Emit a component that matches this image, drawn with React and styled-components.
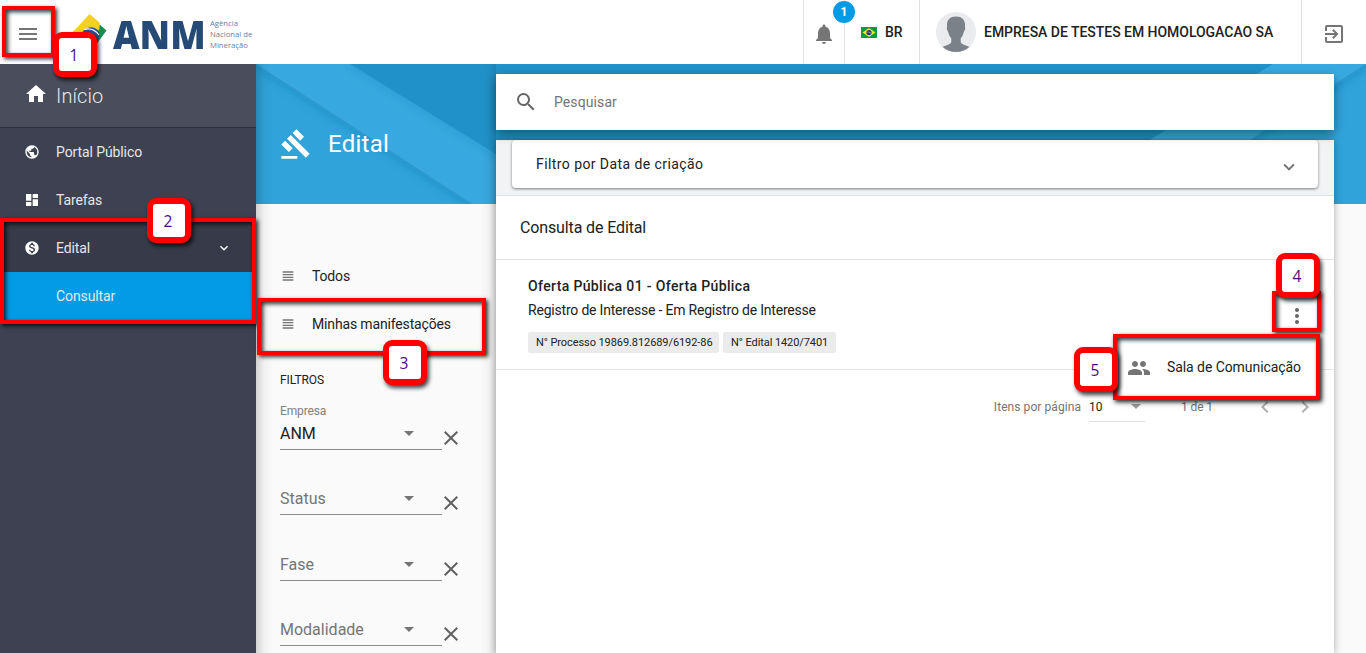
import React from "react";
import styled, { createGlobalStyle } from "styled-components";
import {
  MdMenu, MdHome, MdPublic, MdDashboard, MdMonetizationOn, MdKeyboardArrowDown,
  MdNotifications, MdExitToApp, MdGavel, MdSearch, MdViewHeadline, MdClose,
  MdPeople, MdMoreVert, MdChevronLeft, MdChevronRight,
} from "react-icons/md";

const GlobalStyle = createGlobalStyle`
  * { box-sizing: border-box; }
  body { margin: 0; overflow: hidden; background: #fafafa; }
  svg { display: block; flex: none; }
`;

const Page = styled.div`
  position: relative;
  display: flex;
  flex-direction: column;
  width: 1366px;
  height: 653px;
  overflow: hidden;
  font-family: Roboto, "Liberation Sans", sans-serif;
  font-size: 14px;
  color: #212121;
`;

/* Top bar */
const TopBar = styled.header`
  display: flex;
  height: 64px;
  flex: none;
  background: #fff;
`;
const MenuButton = styled.div`
  display: flex;
  padding: 22px 0 0 16px;
  width: 73px;
  color: #757575;
`;
const Brand = styled.div`
  display: flex;
  flex: 1;
  padding-top: 14px;
`;
const BrandName = styled.div`
  width: 97px;
  margin-left: 6px;
  font: 800 39px/39px "Open Sans", sans-serif;
  color: #254a75;
  transform: scaleX(0.94);
  transform-origin: left;
  white-space: nowrap;
`;
const BrandCaption = styled.div`
  padding-top: 4px;
  font: 400 7.7px/11px "Open Sans", sans-serif;
  color: #6483a6;
  white-space: nowrap;
`;
const TopCell = styled.div`
  position: relative;
  display: flex;
  gap: 8px;
  width: ${(p) => p.$width}px;
  padding: ${(p) => p.$pad};
  border-left: 1px solid #e0e0e0;
  color: #757575;
`;
const TopLabel = styled.span`
  margin-top: ${(p) => p.$top || 0}px;
  font-weight: 500;
  line-height: 16px;
  letter-spacing: ${(p) => p.$spacing || 0}px;
  color: #212121;
  white-space: nowrap;
`;
const FlagSlot = styled.span`
  padding-top: 3px;
`;
const Counter = styled.span`
  position: absolute;
  top: 1px;
  right: -11px;
  z-index: 1;
  width: 22px;
  height: 22px;
  border-radius: 50%;
  background: #039be5;
  color: #fff;
  font-size: 12px;
  font-weight: 700;
  line-height: 22px;
  text-align: center;
`;

/* Sidebar */
const Body = styled.div`
  display: flex;
  flex: 1;
  min-height: 0;
`;
const Sidebar = styled.nav`
  width: 256px;
  flex: none;
  background: #3d4151;
  color: #e6e7ea;
`;
const SideHome = styled.div`
  display: flex;
  height: 64px;
  padding: 18px 0 0 24px;
  gap: 8px;
  background: #494d5c;
  border-bottom: 1px solid #2e313d;
  font-size: 20px;
  font-weight: 300;
  line-height: 28px;
  letter-spacing: 0.1px;
  svg { color: #fff; }
`;
const SideItem = styled.div`
  display: flex;
  align-items: center;
  height: 48px;
  padding: 0 24px;
  background: ${(p) => p.$bg || "transparent"};
  letter-spacing: -0.1px;
  svg { color: #fff; }
`;
const SideLabel = styled.span`
  flex: 1;
  margin-left: ${(p) => (p.$nested ? 32 : 16)}px;
`;

/* Content */
const Content = styled.div`
  position: relative;
  display: flex;
  flex: 1;
  background: #fafafa;
`;
const Backdrop = styled.svg`
  position: absolute;
  top: 0;
  left: 0;
`;
const FilterColumn = styled.aside`
  position: relative;
  width: 240px;
  background: linear-gradient(90deg, rgba(0,0,0,.16), rgba(0,0,0,.04) 8px, transparent 17px,
    transparent 224px, rgba(0,0,0,.03) 233px, rgba(0,0,0,.1));
  padding: 0 24px;
`;
const Heading = styled.div`
  display: flex;
  align-items: center;
  gap: 16px;
  height: 140px;
  padding-top: 20px;
  margin-bottom: 48px;
  color: #fff;
  font-size: 24px;
  letter-spacing: 0.25px;
`;
const ListLink = styled.div`
  display: flex;
  align-items: center;
  gap: 16px;
  height: 48px;
  letter-spacing: -0.15px;
  white-space: nowrap;
  svg { color: #757575; }
`;
const GroupTitle = styled.div`
  margin-top: 25px;
  height: 11.7px;
  font-size: 12px;
  line-height: 15px;
  letter-spacing: -0.1px;
`;
const Field = styled.div`
  display: flex;
  height: 65.35px;
  align-items: flex-end;
`;
const SelectBox = styled.div`
  width: 162px;
  padding-right: 28px;
  border-bottom: 1px solid #8c8c8c;
  height: ${(p) => (p.$caption ? 48 : 27)}px;
`;
const Caption = styled.div`
  height: 21px;
  font-size: 12px;
  line-height: 18px;
  letter-spacing: -0.15px;
  color: #808080;
`;
const SelectValue = styled.div`
  display: flex;
  align-items: center;
  justify-content: space-between;
  height: 21px;
  font-size: 16px;
  color: ${(p) => (p.$filled ? "#212121" : "#757575")};
`;
const Caret = styled.i`
  border: solid transparent;
  border-width: 5px 5px 0;
  border-top-color: #757575;
`;
const ClearButton = styled.div`
  margin: 0 0 0 -3px;
  width: 24px;
  color: #616161;
`;

/* Main panel */
const Main = styled.main`
  position: relative;
  display: flex;
  flex-direction: column;
  width: 838px;
`;
const SearchBar = styled.div`
  position: relative;
  z-index: 1;
  display: flex;
  align-items: center;
  gap: 16px;
  height: 56px;
  flex: none;
  margin: 10px 0;
  padding: 0 18px;
  background: #fff;
  box-shadow: 0 4px 10px rgba(0,0,0,.4);
  color: #757575;
  svg { color: #666; }
`;
const SearchHint = styled.span`
  letter-spacing: 0.1px;
`;
const Results = styled.section`
  flex: 1;
  background: #fff;
  box-shadow: 0 1px 8px rgba(0,0,0,.32);
`;
const FilterStrip = styled.div`
  height: 56px;
  padding: 0 16px;
  background: #f2f3f5;
  border-bottom: 1px solid #dedfe1;
`;
const Expander = styled.div`
  display: flex;
  justify-content: space-between;
  align-items: center;
  height: 48px;
  padding: 0 18px 0 24px;
  border-radius: 4px;
  background: #fff;
  box-shadow: 0 1px 3px rgba(0,0,0,.5);
  letter-spacing: 0.42px;
  svg { color: #757575; margin-top: 6px; }
`;
const ResultsTitle = styled.div`
  height: 64px;
  padding: 0 24px;
  border-bottom: 1px solid #e0e0e0;
  font-size: 16px;
  line-height: 63px;
  letter-spacing: -0.13px;
`;
const Notice = styled.article`
  display: flex;
  justify-content: space-between;
  height: 110px;
  padding: 17px 25px 0 32px;
  border-bottom: 1px solid #e6e6e6;
`;
const NoticeTitle = styled.div`
  font-weight: 500;
  line-height: 18px;
  letter-spacing: 0.36px;
`;
const NoticeText = styled.div`
  margin-top: 6px;
  line-height: 18px;
  letter-spacing: -0.2px;
`;
const Tags = styled.div`
  display: flex;
  gap: 4px;
  margin-top: 13px;
`;
const Tag = styled.span`
  height: 21px;
  width: ${(p) => p.$width}px;
  padding-left: 8px;
  border-radius: 2px;
  background: #ebebeb;
  font-size: 11px;
  line-height: 21px;
  letter-spacing: -0.08px;
  white-space: nowrap;
`;
const MoreButton = styled.div`
  margin-top: 27px;
  color: #666;
`;
const Pager = styled.div`
  display: flex;
  justify-content: flex-end;
  padding: 25px 17px 0 0;
  font-size: 12px;
  line-height: 24px;
  color: #757575;
`;
const PagerSize = styled.div`
  display: flex;
  align-items: center;
  justify-content: space-between;
  width: 56px;
  height: 27px;
  margin: 0 36px 0 8px;
  padding: 0 4px 3px 0;
  border-bottom: 1px solid #e0e0e0;
  color: #212121;
  i { opacity: .7; }
`;
const PagerArrows = styled.div`
  display: flex;
  gap: 16px;
  margin-left: 40px;
  color: #b0b0b0;
`;
const PagerText = styled.span`
  letter-spacing: ${(p) => p.$spacing || 0}px;
`;
const ContextMenu = styled.div`
  position: absolute;
  z-index: 2;
  left: 620px;
  top: 272px;
  display: flex;
  align-items: center;
  gap: 16px;
  width: 204px;
  height: 63px;
  padding-left: 11px;
  background: #fff;
  box-shadow: 0 2px 8px rgba(0,0,0,.3);
  white-space: nowrap;
  letter-spacing: -0.07px;
  svg { color: #757575; }
`;
const MenuLabel = styled.span`
  padding-bottom: 2px;
`;

/* Tutorial callouts drawn over the screen */
const Frame = styled.div`
  position: absolute;
  z-index: 5;
  left: ${(p) => p.$x}px;
  top: ${(p) => p.$y}px;
  width: ${(p) => p.$w}px;
  height: ${(p) => p.$h}px;
  border: 4px solid #f00;
  box-shadow: 2px 2px 4px rgba(0,0,0,.8), inset 2px 2px 4px rgba(0,0,0,.8);
`;
const Step = styled.div`
  position: absolute;
  z-index: 6;
  left: ${(p) => p.$x}px;
  top: ${(p) => p.$y}px;
  width: 44px;
  height: 45px;
  padding-right: 2px;
  border: 6px solid #f00;
  border-radius: 9px;
  background: #fff;
  box-shadow: 2px 3px 4px rgba(0,0,0,.75);
  font: 400 15.5px/35px "Open Sans", "Noto Sans", sans-serif;
  color: #4b0a82;
  text-align: center;
`;

const frames = [
  [2, 6, 53, 51], [0, 218, 256, 106], [257, 298, 229, 57], [1272, 291, 49, 41], [1113, 334, 207, 66],
];
const steps = [[53, 32], [147, 198], [383, 340], [1276, 253], [1074, 347]];

function BrandMark() {
  return (
    <svg width="34" height="36" viewBox="0 0 34 36">
      <path d="M0 17 L12 15 Q18 30 25 24 L25 9 L33.500 16.500 L20 35 Z" fill="#1c8a55" />
      <path d="M16.500 0 L27 9 L26 17 Q20 10 9 18 L0 18 Z" fill="#f3d021" />
      <path d="M10 17 Q18 10 25 16 Q28 20 25 26 Q18 31 10 17Z" fill="#21528c" />
      <path d="M11 15.500 Q20 13 26 21" fill="none" stroke="#fff" strokeWidth="1.100" />
    </svg>
  );
}

function Flag() {
  return (
    <svg width="16" height="11" viewBox="0 0 16 11">
      <rect width="16" height="11" fill="#0d9a3c" />
      <path d="M8 1 L14.500 5.500 L8 10 L1.500 5.500Z" fill="#f7e017" />
      <circle cx="8" cy="5.500" r="2.600" fill="#20387c" />
      <path d="M5.600 5 Q8 4.600 10.300 6.400" fill="none" stroke="#b9c8e0" strokeWidth=".6" />
    </svg>
  );
}

function Avatar() {
  return (
    <svg width="40" height="40" viewBox="0 0 40 40">
      <defs><clipPath id="face"><circle cx="20" cy="20" r="20" /></clipPath></defs>
      <g clipPath="url(#face)">
        <rect width="40" height="40" fill="#e9ebee" />
        <path
          d="M20 4.500c-6 0-9.300 3.500-9 9 .1 1.500-.4 2-.1 3.500.3 1.700 1 2.200 1.400 3.200.5 2.600 1.400 4.300 3 6v4c-1.500 3-7 3.300-9.800 5.300L3 42h34l-2.500-6.500c-2.800-2-8.300-2.300-9.800-5.300v-4c1.600-1.700 2.500-3.400 3-6 .4-1 1.100-1.500 1.400-3.200.3-1.500-.2-2-.1-3.500.3-5.500-3-9-9-9z"
          fill="#7a8189"
        />
      </g>
    </svg>
  );
}

function HeroArt() {
  return (
    <Backdrop width="1110" height="140" viewBox="0 0 1110 140">
      <defs>
        <filter id="soft" x="-10%" y="-10%" width="120%" height="120%"><feGaussianBlur stdDeviation="5" /></filter>
        <clipPath id="lower"><path d="M0 0 L216 140 H0Z M1110 0 V140 H897Z" /></clipPath>
        <clipPath id="band"><path d="M0 0 L94 0 L321 140 H216Z" /></clipPath>
      </defs>
      <rect width="1110" height="140" fill="#2092c9" />
      <path d="M0 0 H94 L321 140 H216Z" fill="#38a9e0" />
      <path d="M0 0 L216 140 H0Z" fill="#30a3da" />
      <path d="M1017 0 H1110 L897 140 H790Z" fill="#38a9e0" />
      <path d="M1110 0 V140 H897Z" fill="#30a3da" />
      <g clipPath="url(#band)">
        <path d="M94 0 L321 140" fill="none" stroke="#167fb4" strokeOpacity=".35" strokeWidth="5" filter="url(#soft)" />
      </g>
      <g clipPath="url(#lower)">
        <path d="M0 0 L216 140 M1110 0 L897 140" fill="none" stroke="#167fb4" strokeOpacity=".6" strokeWidth="6" filter="url(#soft)" />
      </g>
    </Backdrop>
  );
}

function FilterField({ caption, value, filled }) {
  return (
    <Field>
      <SelectBox $caption={caption}>
        {caption && <Caption>{caption}</Caption>}
        <SelectValue $filled={filled}>{value}<Caret /></SelectValue>
      </SelectBox>
      <ClearButton><MdClose size={24} /></ClearButton>
    </Field>
  );
}

export default function App() {
  return (
    <Page>
      <GlobalStyle />
      <TopBar>
        <MenuButton><MdMenu size={24} /></MenuButton>
        <Brand>
          <BrandMark />
          <BrandName>ANM</BrandName>
          <BrandCaption>Agência<br />Nacional de<br />Mineração</BrandCaption>
        </Brand>
        <TopCell $width={41} $pad="22px 0 0 8px">
          <MdNotifications size={24} />
          <Counter>1</Counter>
        </TopCell>
        <TopCell $width={75} $pad="24px 0 0 16px">
          <FlagSlot><Flag /></FlagSlot>
          <TopLabel>BR</TopLabel>
        </TopCell>
        <TopCell $width={382} $pad="12px 0 0 16px">
          <Avatar />
          <TopLabel $top={12} $spacing={-0.03}>EMPRESA DE TESTES EM HOMOLOGACAO SA</TopLabel>
        </TopCell>
        <TopCell $width={65} $pad="22px 0 0 20px"><MdExitToApp size={24} /></TopCell>
      </TopBar>
      <Body>
        <Sidebar>
          <SideHome><MdHome size={24} />Início</SideHome>
          <SideItem><MdPublic size={16} /><SideLabel>Portal Público</SideLabel></SideItem>
          <SideItem><MdDashboard size={16} /><SideLabel>Tarefas</SideLabel></SideItem>
          <SideItem $bg="#373a48"><MdMonetizationOn size={16} /><SideLabel>Edital</SideLabel><MdKeyboardArrowDown size={16} /></SideItem>
          <SideItem $bg="#039be5"><SideLabel $nested>Consultar</SideLabel></SideItem>
        </Sidebar>
        <Content>
          <HeroArt />
          <FilterColumn>
            <Heading><MdGavel size={32} />Edital</Heading>
            <ListLink><MdViewHeadline size={16} />Todos</ListLink>
            <ListLink><MdViewHeadline size={16} />Minhas manifestações</ListLink>
            <GroupTitle>FILTROS</GroupTitle>
            <FilterField caption="Empresa" value="ANM" filled />
            <FilterField value="Status" />
            <FilterField value="Fase" />
            <FilterField value="Modalidade" />
          </FilterColumn>
          <Main>
            <SearchBar><MdSearch size={24} /><SearchHint>Pesquisar</SearchHint></SearchBar>
            <Results>
              <FilterStrip>
                <Expander>Filtro por Data de criação<MdKeyboardArrowDown size={22} /></Expander>
              </FilterStrip>
              <ResultsTitle>Consulta de Edital</ResultsTitle>
              <Notice>
                <div>
                  <NoticeTitle>Oferta Pública 01 - Oferta Pública</NoticeTitle>
                  <NoticeText>Registro de Interesse - Em Registro de Interesse</NoticeText>
                  <Tags>
                    <Tag $width={191}>N° Processo 19869.812689/6192-86</Tag>
                    <Tag $width={113}>N° Edital 1420/7401</Tag>
                  </Tags>
                </div>
                <MoreButton><MdMoreVert size={24} /></MoreButton>
              </Notice>
              <Pager>
                <PagerText $spacing={0.07}>Itens por página</PagerText>
                <PagerSize>10<Caret /></PagerSize>
                <PagerText $spacing={-0.1}>1 de 1</PagerText>
                <PagerArrows><MdChevronLeft size={24} /><MdChevronRight size={24} /></PagerArrows>
              </Pager>
            </Results>
            <ContextMenu><MdPeople size={24} /><MenuLabel>Sala de Comunicação</MenuLabel></ContextMenu>
          </Main>
        </Content>
      </Body>
      {frames.map(([x, y, w, h]) => <Frame key={x} $x={x} $y={y} $w={w} $h={h} />)}
      {steps.map(([x, y], i) => <Step key={x} $x={x} $y={y}>{i + 1}</Step>)}
    </Page>
  );
}
